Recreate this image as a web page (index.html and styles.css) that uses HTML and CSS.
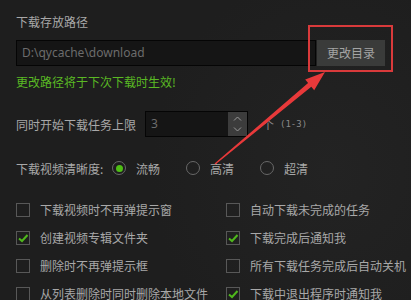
FILE: index.html
```html
<!DOCTYPE html>
<html lang="zh-CN">
<head>
<meta charset="utf-8">
<link rel="stylesheet" href="styles.css">
</head>
<body>
<div class="panel">
  <div class="title">下载存放路径</div>
  <div class="path-row">
    <div class="path-input">D:\qycache\download</div>
    <div class="btn">更改目录</div>
  </div>
  <div class="hint">更改路径将于下次下载时生效!</div>
  <div class="limit-row">
    <span class="label">同时开始下载任务上限</span>
    <div class="spin">
      <span class="spin-val">3</span>
      <div class="spin-btns">
        <svg width="19" height="24" viewBox="0 0 19 24"><path d="M6 8.5 L9.5 5 L13 8.5 M6 15.5 L9.5 19 L13 15.5" fill="none" stroke="#9a9a9a" stroke-width="1"/></svg>
      </div>
    </div>
    <span class="unit">个</span><span class="range">(1-3)</span>
  </div>
  <div class="quality-row">
    <span class="qlabel">下载视频清晰度:</span>
    <span class="opt"><span class="radio on"></span>流畅</span>
    <span class="opt"><span class="radio"></span>高清</span>
    <span class="opt"><span class="radio"></span>超清</span>
  </div>
  <div class="checks">
    <div class="chk"><span class="box"></span>下载视频时不再弹提示窗</div>
    <div class="chk"><span class="box"></span>自动下载未完成的任务</div>
    <div class="chk"><span class="box on"><svg width="12" height="12" viewBox="0 0 12 12"><path d="M2 6.5 L5 9 L10.5 3" fill="none" stroke="#4fb81c" stroke-width="2"/></svg></span>创建视频专辑文件夹</div>
    <div class="chk"><span class="box on"><svg width="12" height="12" viewBox="0 0 12 12"><path d="M2 6.5 L5 9 L10.5 3" fill="none" stroke="#4fb81c" stroke-width="2"/></svg></span>下载完成后通知我</div>
    <div class="chk"><span class="box"></span>删除时不再弹提示框</div>
    <div class="chk"><span class="box"></span>所有下载任务完成后自动关机</div>
    <div class="chk"><span class="box"></span>从列表删除时同时删除本地文件</div>
    <div class="chk"><span class="box on"><svg width="12" height="12" viewBox="0 0 12 12"><path d="M2 6.5 L5 9 L10.5 3" fill="none" stroke="#4fb81c" stroke-width="2"/></svg></span>下载中退出程序时通知我</div>
  </div>
</div>
<div class="mark-box"></div>
<svg class="arrow" width="411" height="300" viewBox="0 0 411 300">
  <polygon points="325,72 305.2,79.4 308.1,82.9 214.6,163.5 215.4,164.5 311.3,86.7 314.2,90.2" fill="#e8393a"/>
</svg>
</body>
</html>
```
FILE: styles.css
```css
html, body {
  margin: 0;
  padding: 0;
}
body {
  width: 411px;
  height: 300px;
  overflow: hidden;
  background: radial-gradient(ellipse 180px 200px at 330px 170px, #232323 0%, #1e1e1e 100%);
  background-color: #1e1e1e;
  color: #a8a8a8;
  font-family: "Noto Sans CJK SC", "Noto Sans", sans-serif;
  font-size: 12px;
  position: relative;
}
.panel {
  padding: 14px 0 0 16px;
}
.title {
  line-height: 16px;
  height: 16px;
}
.path-row {
  display: flex;
  margin-top: 10px;
  height: 26px;
}
.path-input {
  height: 24px;
  border: 1px solid #050505;
  background: #151515;
  color: #6c6c6c;
  font-family: "Noto Sans", sans-serif;
  line-height: 24px;
  padding-left: 5px;
  box-sizing: content-box;
  width: 293px;
}
.btn {
  width: 68px;
  height: 26px;
  margin-left: 1px;
  background: #3a3b3a;
  color: #a4a4a4;
  line-height: 26px;
  text-align: center;
}
.hint {
  margin-top: 8px;
  line-height: 16px;
  height: 16px;
  color: #5ab924;
}
.limit-row {
  display: flex;
  align-items: center;
  margin-top: 21px;
  height: 26px;
}
.label {
  width: 129px;
}
.spin {
  width: 101px;
  height: 24px;
  border: 1px solid #050505;
  background: #151515;
  display: flex;
  justify-content: space-between;
}
.spin-val {
  color: #6c6c6c;
  font-family: "Noto Sans", sans-serif;
  line-height: 24px;
  padding-left: 5px;
}
.spin-btns {
  width: 19px;
  height: 24px;
  background: #3c3c3c;
}
.spin-btns svg {
  display: block;
}
.unit {
  margin-left: 14px;
  color: #8a8a8a;
}
.range {
  font-family: "DejaVu Sans Mono", monospace;
  font-size: 9px;
  margin-left: 6px;
  color: #8a8a8a;
}
.quality-row {
  display: flex;
  align-items: center;
  margin-top: 23px;
  height: 16px;
}
.qlabel {
  width: 96px;
}
.opt {
  display: flex;
  align-items: center;
  width: 74px;
}
.radio {
  width: 14px;
  height: 14px;
  box-sizing: border-box;
  border: 1.5px solid #686868;
  border-radius: 50%;
  margin-right: 10px;
  display: flex;
  align-items: center;
  justify-content: center;
}
.radio.on::after {
  content: "";
  width: 7px;
  height: 7px;
  border-radius: 50%;
  background: #4fbf15;
}
.checks {
  display: grid;
  grid-template-columns: 210px 1fr;
  row-gap: 12px;
  margin-top: 26px;
}
.chk {
  display: flex;
  align-items: center;
  height: 16px;
  line-height: 16px;
  white-space: nowrap;
}
.box {
  width: 14px;
  height: 14px;
  box-sizing: border-box;
  border: 1px solid #585858;
  margin-right: 10px;
  display: flex;
  align-items: center;
  justify-content: center;
  flex: none;
}
.box svg {
  display: block;
}
.mark-box {
  position: absolute;
  left: 308px;
  top: 25px;
  width: 85px;
  height: 47px;
  box-sizing: border-box;
  border: 2px solid #d93a3b;
}
.arrow {
  position: absolute;
  left: 0;
  top: 0;
}
```
